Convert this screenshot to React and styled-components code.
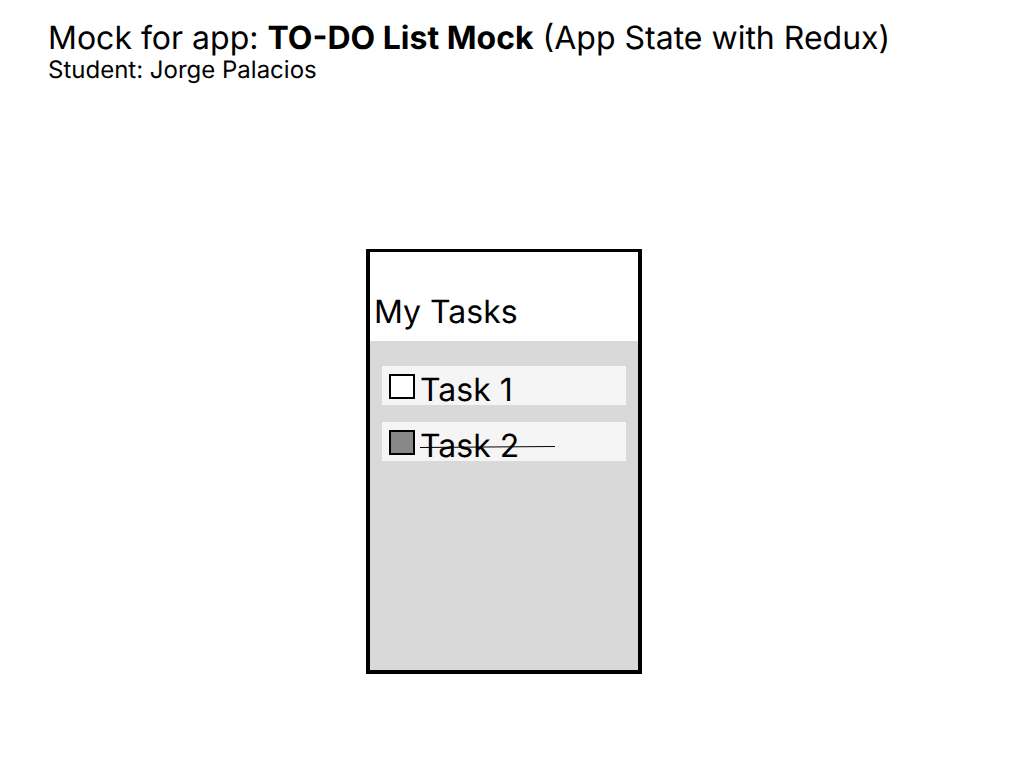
import React, { useState } from 'react';
import styled, { createGlobalStyle } from 'styled-components';

const GlobalStyle = createGlobalStyle`
  * { box-sizing: border-box; }
  body {
    margin: 0;
    background: #fff;
    color: #000;
    font-family: Inter, "Liberation Sans", sans-serif;
    text-rendering: geometricPrecision;
  }
`;

const Page = styled.div`
  padding: 18px 64px 48px 48px;
`;

const Title = styled.h1`
  margin: 0;
  font-size: 32px;
  line-height: 40px;
  font-weight: 400;
`;

const Student = styled.p`
  margin: 0;
  font-size: 24px;
  line-height: 24px;
`;

const Phone = styled.main`
  display: flex;
  flex-direction: column;
  width: 276px;
  min-height: 425px;
  margin: 167px auto 0;
  border: 4px solid #000;
  border-top-width: 3px;
  background: #d9d9d9;
`;

const PhoneHeader = styled.header`
  padding: 40px 4px 9px;
  background: #fff;
`;

const Heading = styled.h2`
  margin: 0;
  font-size: 32px;
  line-height: 40px;
  font-weight: 400;
`;

const TaskList = styled.ul`
  display: flex;
  flex-direction: column;
  gap: 17px;
  margin: 0;
  padding: 25px 12px;
  list-style: none;
`;

const TaskRow = styled.li`
  display: flex;
  align-items: flex-start;
  height: 39px;
  padding: 0 7px;
  background: #f5f5f5;
`;

const Checkbox = styled.input`
  appearance: none;
  flex: none;
  width: 26px;
  height: 25px;
  margin: 8px 0 0;
  border: 2px solid #000;
  background: #fff;

  &:checked { background: #888; }
`;

const TaskLabel = styled.label`
  position: relative;
  padding: 4px 37px 0 5px;
  font-size: 32px;
  line-height: 40px;
`;

const Strike = styled.svg`
  position: absolute;
  left: 5px;
  top: 23px;
  width: 135px;
  height: 3px;
`;

function Task({ id, name, initialDone }) {
  const [done, setDone] = useState(initialDone);
  return (
    <TaskRow>
      <Checkbox id={id} type="checkbox" checked={done} onChange={() => setDone(!done)} />
      <TaskLabel htmlFor={id}>
        {name}
        {done && (
          <Strike viewBox="0 0 135 3" aria-hidden="true">
            <path d="M0 2.5L135 1.5" stroke="#000" />
          </Strike>
        )}
      </TaskLabel>
    </TaskRow>
  );
}

export default function App() {
  return (
    <>
      <GlobalStyle />
      <Page>
        <Title>
          Mock for app: <strong>TO-DO List Mock</strong> (App State with Redux)
        </Title>
        <Student>Student: Jorge Palacios</Student>
        <Phone>
          <PhoneHeader>
            <Heading>My Tasks</Heading>
          </PhoneHeader>
          <TaskList>
            <Task id="task-1" name="Task 1" initialDone={false} />
            <Task id="task-2" name="Task 2" initialDone />
          </TaskList>
        </Phone>
      </Page>
    </>
  );
}
